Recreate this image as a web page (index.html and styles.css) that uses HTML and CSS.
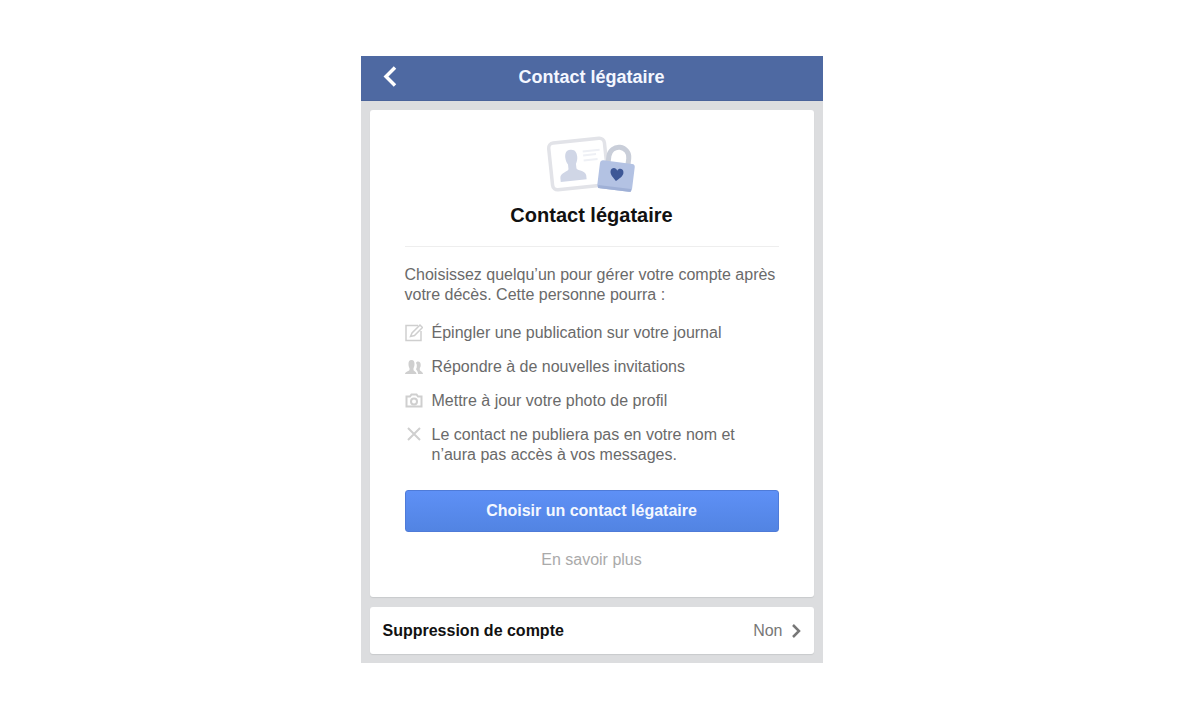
FILE: index.html
```html
<!DOCTYPE html>
<html lang="fr">
<head>
  <meta charset="UTF-8">
  <meta name="viewport" content="width=device-width, initial-scale=1.0">
  <title>Contact légataire</title>
  <link rel="stylesheet" href="styles.css">
</head>
<body>

  <div class="screen">
    <!-- Header -->
    <header class="header">
      <button class="back-btn" type="button" aria-label="Retour">
        <svg width="16" height="22" viewBox="0 0 16 22" fill="none" stroke="#fff" stroke-width="3.500">
          <path d="M13 1.500 4 10.500l9 9"/>
        </svg>
      </button>
      <h1>Contact légataire</h1>
    </header>

    <main class="content">
      <!-- Legacy contact -->
      <section class="card legacy">
        <svg class="legacy-icon" width="92" height="60" viewBox="0 0 92 60">
          <g transform="rotate(-6 32 30)">
            <rect x="4.500" y="6.500" width="56" height="47" rx="5" fill="#fff" stroke="#e2e3e8" stroke-width="3.500"/>
            <path fill="#d0d6e6" d="M26 15c4.500 0 6 3 6 7.500 0 3-1 5.500-2 7v4.500c0 2.500 9 3 9 8v4H13v-4c0-5 9-5.500 9-8v-4.500c-1-1.500-2-4-2-7 0-4.500 1.500-7.500 6-7.500z"/>
            <path d="M38 18h17M38 22h13M38 27h14" stroke="#eef0f5" stroke-width="2"/>
          </g>
          <g transform="rotate(7 70 38)">
            <path d="M61 32V23a10 10 0 0 1 20 0v9" fill="none" stroke="#c9ced9" stroke-width="5"/>
            <rect x="53" y="28" width="35" height="28" rx="3" fill="#b3c2e3"/>
            <path d="M54 54.500h33" stroke="#9fb0d6" stroke-width="3"/>
            <path fill="#3d5796" d="M71 47c-3-3-6.500-5.500-6.500-9 0-4 5-5 6.500-1.500 1.500-3.500 6.500-2.500 6.500 1.500 0 3.500-3.500 6-6.500 9z"/>
          </g>
        </svg>
        <h2>Contact légataire</h2>
        <p class="intro">Choisissez quelqu’un pour gérer votre compte après votre décès. Cette personne pourra :</p>
        <ul class="rights">
          <li>
            <svg width="18" height="20" viewBox="0 0 18 20" fill="none" stroke="#cfcfcf" stroke-width="1.500">
              <path d="M13 2.500H1v15h15V8"/>
              <path d="M5.500 13.500 7 10l8-8 2.500 2.500-8 8z"/>
            </svg>
            <span>Épingler une publication sur votre journal</span>
          </li>
          <li>
            <svg width="18" height="20" viewBox="0 0 18 20" fill="#cfcfcf">
              <path d="M6.500 3C9 3 9.500 5 9.500 7s-.5 3.500-1 4v2c0 1 3 1.500 3 4H0c0-2.500 4.500-3 4.500-4v-2C4 10.500 3.500 9 3.500 7s.5-4 3-4z"/>
              <path d="M13 4.500c2 0 2.700 1.500 2.700 3.500 0 1.500-.4 2.500-.9 3v2c0 1 3.200 1.500 3.200 4h-5c0-3-2-4-2-5 .8-1 .8-2 .8-4 0-1-.8-2-.8-2 .3-1 1-1.500 2-1.500z"/>
            </svg>
            <span>Répondre à de nouvelles invitations</span>
          </li>
          <li>
            <svg width="18" height="20" viewBox="0 0 18 20" fill="none" stroke="#cfcfcf" stroke-width="2">
              <path d="M1.500 5.500H5l1.500-2h5l1.500 2h3.500v10h-15z"/>
              <circle cx="9" cy="10.500" r="3"/>
            </svg>
            <span>Mettre à jour votre photo de profil</span>
          </li>
          <li>
            <svg width="18" height="20" viewBox="0 0 18 20" fill="none" stroke="#cfcfcf" stroke-width="2">
              <path d="m3 3 12 12M15 3 3 15"/>
            </svg>
            <span>Le contact ne publiera pas en votre nom et n’aura pas accès à vos messages.</span>
          </li>
        </ul>
        <button class="choose-btn" type="button">Choisir un contact légataire</button>
        <a class="more" href="#">En savoir plus</a>
      </section>

      <!-- Account deletion -->
      <a class="card deletion" href="#">
        <strong>Suppression de compte</strong>
        <span>Non</span>
        <svg width="10" height="14" viewBox="0 0 10 14" fill="none" stroke="#777" stroke-width="2.500">
          <path d="m2 1 6 6-6 6"/>
        </svg>
      </a>
    </main>
  </div>

</body>
</html>
```
FILE: styles.css
```css
* {
  margin: 0;
  padding: 0;
  box-sizing: border-box;
}

body {
  font-family: "Liberation Sans", Arial, sans-serif;
  font-size: 16px;
  line-height: 20px;
  color: #6a6a6a;
  background-color: #fff;
  padding: 56px 17px 56px 0;
}

.screen {
  width: 100%;
  max-width: 462px;
  margin: 0 auto;
  background-color: #dcdddf;
}

/* Header */
.header {
  display: grid;
  grid-template-columns: 40px 1fr 40px;
  align-items: center;
  height: 45px;
  padding: 0 9px 3px;
  background-color: #4e69a2;
  border-bottom: 1px solid #4a639a;
}

.header h1 {
  color: #f4f7ff;
  font-size: 18px;
  font-weight: bold;
  text-align: center;
}

.back-btn {
  display: flex;
  justify-content: center;
  background: none;
  border: none;
  cursor: pointer;
}

/* Cards */
.content {
  display: flex;
  flex-direction: column;
  gap: 10px;
  padding: 9px;
}

.card {
  background-color: #fff;
  border-radius: 3px;
  box-shadow: 0 1px 1px #c8cacc;
}

.legacy {
  display: flex;
  flex-direction: column;
  align-items: center;
  padding: 24px 35px 27px;
}

.legacy h2 {
  width: 100%;
  padding: 9px 0 19px;
  border-bottom: 1px solid #eee;
  color: #111;
  font-size: 20px;
  line-height: 24px;
  text-align: center;
}

.intro {
  margin-top: 18px;
}

.rights {
  display: flex;
  flex-direction: column;
  gap: 14px;
  width: 100%;
  margin-top: 18px;
  list-style: none;
}

.rights li {
  display: flex;
  gap: 9px;
}

.rights svg {
  flex: none;
}

.rights span {
  max-width: 320px;
}

.choose-btn {
  width: 100%;
  height: 42px;
  margin-top: 25px;
  border: 1px solid #4f7bd8;
  border-radius: 3px;
  background: linear-gradient(#5e90f6, #5284e2);
  color: #f4f8ff;
  font: bold 16px "Liberation Sans", Arial, sans-serif;
  cursor: pointer;
}

.more {
  margin-top: 18px;
  color: #aaa;
  text-decoration: none;
}

/* Account deletion */
.deletion {
  display: flex;
  align-items: center;
  gap: 8px;
  height: 47px;
  padding: 0 13px;
  color: #777;
  text-decoration: none;
}

.deletion strong {
  flex: 1;
  color: #111;
}
```
